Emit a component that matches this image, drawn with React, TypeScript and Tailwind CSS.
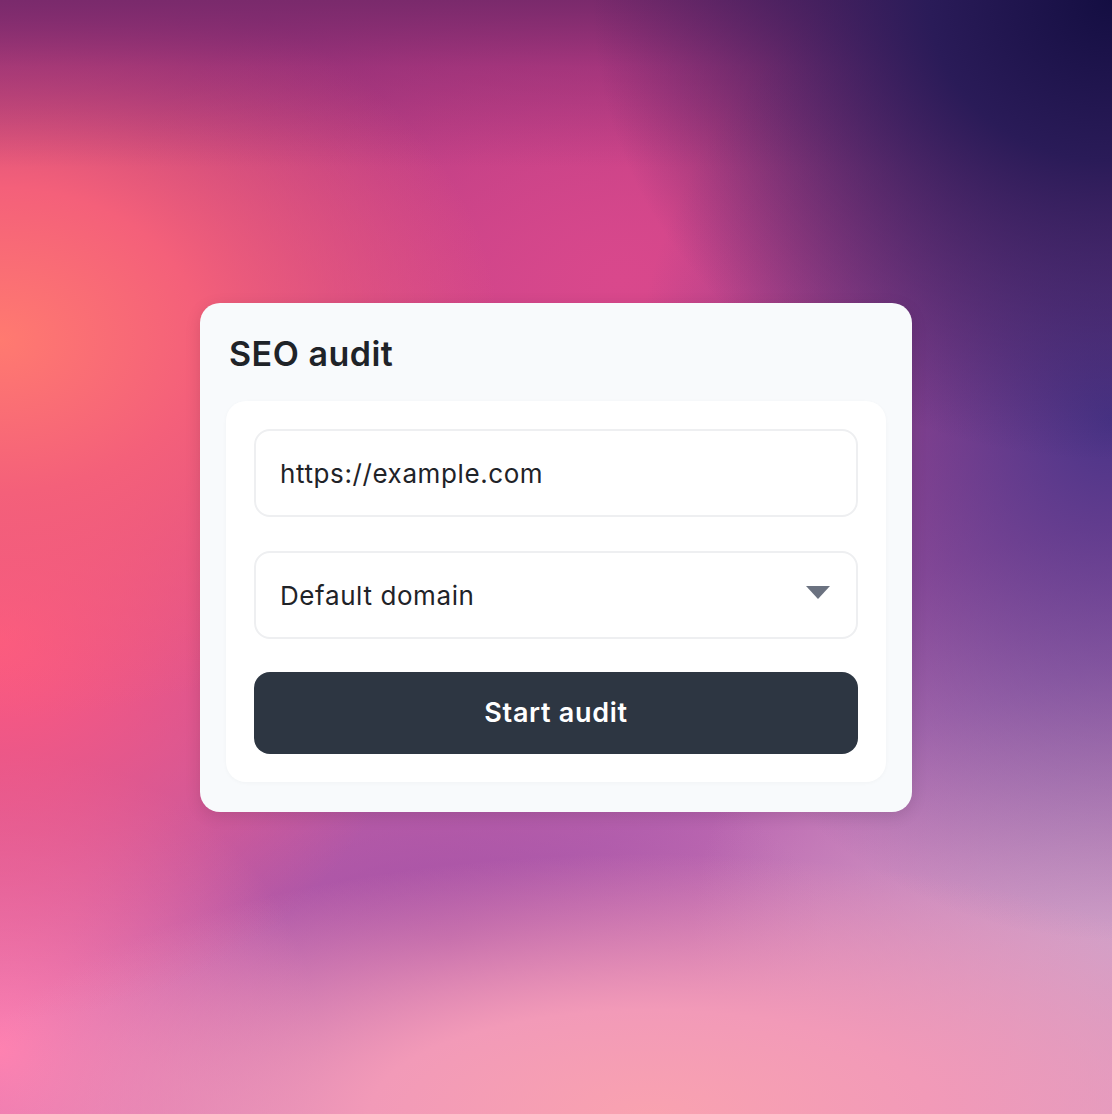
import React from 'react';

export default function App() {
  return (
    <div
      className="flex min-h-[1114px] w-full items-center justify-center bg-[#c24a8a] font-['Inter',sans-serif] bg-[radial-gradient(ellipse_520px_460px_at_1112px_0px,#140e42_0%,#2a1b58_35%,transparent_100%),radial-gradient(ellipse_480px_520px_at_1112px_420px,#4a3488_0%,transparent_100%),linear-gradient(180deg,#7a2a6c_0%,rgba(140,44,116,0.5)_6%,transparent_15%),radial-gradient(ellipse_500px_380px_at_0px_340px,#ff7a70_0%,#f4607a_40%,transparent_100%),radial-gradient(ellipse_420px_380px_at_0px_640px,#ff5a80_0%,transparent_100%),radial-gradient(ellipse_700px_260px_at_650px_1114px,#f9a2b0_0%,#f29ab8_40%,transparent_100%),radial-gradient(ellipse_420px_420px_at_1112px_950px,#d0a0c8_0%,transparent_100%),radial-gradient(ellipse_320px_300px_at_0px_1050px,#ff80b0_0%,transparent_100%),radial-gradient(ellipse_380px_200px_at_450px_940px,#a650a4_0%,transparent_100%),radial-gradient(ellipse_520px_360px_at_620px_280px,#d9488c_0%,transparent_100%),linear-gradient(160deg,#8a2c74_0%,#c8448a_35%,#b864b0_70%,#e49ac0_100%)]"
    >
      <div className="w-[712px] rounded-[20px] bg-[#f8fafc] px-[26px] pb-[30px] pt-[30px] shadow-[0_4px_16px_rgba(0,0,0,0.12)]">
        <h1 className="mb-[26px] pl-[3px] text-[34px] font-semibold leading-[42px] tracking-[0.5px] text-[#1f2328]">
          SEO audit
        </h1>
        <div className="flex flex-col rounded-[20px] bg-white p-[28px] shadow-[0_1px_4px_rgba(0,0,0,0.03)]">
          <div className="flex h-[88px] items-center rounded-[16px] border-2 border-[#eeeff1] bg-white px-[24px] pt-[2px] text-[26px] tracking-[0.6px] text-[#1f2328]">
            https://example.com
          </div>
          <div className="mt-[34px] flex h-[88px] items-center justify-between rounded-[16px] border-2 border-[#eeeff1] bg-white pl-[24px] pr-[26px] text-[26px] tracking-[0.6px] text-[#1f2328]">
            <span className="pt-[2px]">Default domain</span>
            <svg width="24" height="13" viewBox="0 0 24 13" className="mb-[4px]">
              <path d="M0 0 L24 0 L12 13 Z" fill="#6b7280" />
            </svg>
          </div>
          <button className="mt-[33px] flex h-[82px] items-center justify-center rounded-[16px] bg-[#2d3642] pt-[2px] text-[27px] font-semibold tracking-[0.7px] text-white">
            Start audit
          </button>
        </div>
      </div>
    </div>
  );
}
